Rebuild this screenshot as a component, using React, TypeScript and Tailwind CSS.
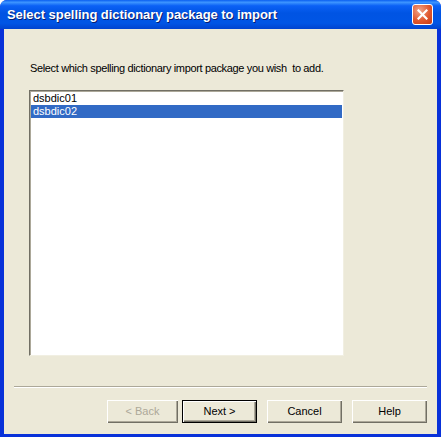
import { useState } from "react";

const items = ["dsbdic01", "dsbdic02"];

function XpButton({
  label,
  disabled,
  primary,
  width = "w-[75px]",
}: {
  label: string;
  disabled?: boolean;
  primary?: boolean;
  width?: string;
}) {
  return (
    <button
      type="button"
      disabled={disabled}
      className={`${width} h-[23px] text-[11px] leading-none bg-[#ECE9D8] ${
        primary
          ? "border border-black shadow-[inset_1px_1px_0_#fff,inset_-1px_-1px_0_#716F64,inset_-2px_-2px_0_#ACA899]"
          : "shadow-[inset_1px_1px_0_#fff,inset_-1px_-1px_0_#716F64,inset_-2px_-2px_0_#ACA899]"
      } ${disabled ? "text-[#ACA899]" : "text-black"}`}
    >
      {label}
    </button>
  );
}

export default function App() {
  const [selected, setSelected] = useState(1);

  return (
    <div
      className="w-[441px] h-[437px] flex flex-col bg-[#0831D9] rounded-t-[7px] overflow-hidden"
      style={{ fontFamily: '"Liberation Sans", Arial, sans-serif' }}
    >
      {/* Title bar */}
      <div className="h-[29px] shrink-0 flex items-center justify-between pl-[7px] pr-[8px] bg-[linear-gradient(to_bottom,#0A5FF0_0%,#3D95FF_8%,#0B61F5_20%,#0054E3_45%,#0055E5_80%,#0043CF_100%)]">
        <span className="text-white font-bold text-[13px] tracking-[-0.05px] [text-shadow:1px_1px_0_#0A1E6E]">
          Select spelling dictionary package to import
        </span>
        <div className="w-[21px] h-[21px] rounded-[3px] border border-white flex items-center justify-center bg-[radial-gradient(circle_at_35%_30%,#F0A58A_0%,#E0582F_55%,#C53A14_100%)]">
          <svg width="11" height="11" viewBox="0 0 11 11">
            <path
              d="M1.5 1.5 L9.5 9.5 M9.5 1.5 L1.5 9.5"
              stroke="#fff"
              strokeWidth="2.2"
              strokeLinecap="square"
            />
          </svg>
        </div>
      </div>

      {/* Body */}
      <div className="flex-1 mx-[4px] mb-[3px] bg-[#ECE9D8] flex flex-col">
        <p className="mt-[33px] ml-[26px] text-[11px] leading-[13px] tracking-[-0.35px] text-black">
          Select which spelling dictionary import package you wish&nbsp; to add.
        </p>

        <div className="mt-[15px] ml-[25px] w-[315px] h-[266px] bg-white border border-t-[#716F64] border-l-[#716F64] border-r-[#F1EFE2] border-b-[#F1EFE2] shadow-[inset_1px_1px_0_#ACA899] pt-[1px] pl-[1px] pr-[1px]">
          {items.map((item, i) => (
            <div
              key={item}
              onClick={() => setSelected(i)}
              className={`h-[13px] pl-[2px] text-[11px] leading-[13px] ${
                selected === i ? "bg-[#316AC5] text-white" : "text-black"
              }`}
            >
              {item}
            </div>
          ))}
        </div>

        <div className="mt-[30px] mx-[10px] h-[2px] border-t border-t-[#ACA899] border-b border-b-white" />

        <div className="mt-[12px] flex justify-end pr-[10px]">
          <div className="flex">
            <XpButton label="< Back" disabled width="w-[71px]" />
            <div className="w-[4px]" />
            <XpButton label="Next >" primary />
            <div className="w-[10px]" />
            <XpButton label="Cancel" />
            <div className="w-[10px]" />
            <XpButton label="Help" />
          </div>
        </div>
      </div>
    </div>
  );
}
